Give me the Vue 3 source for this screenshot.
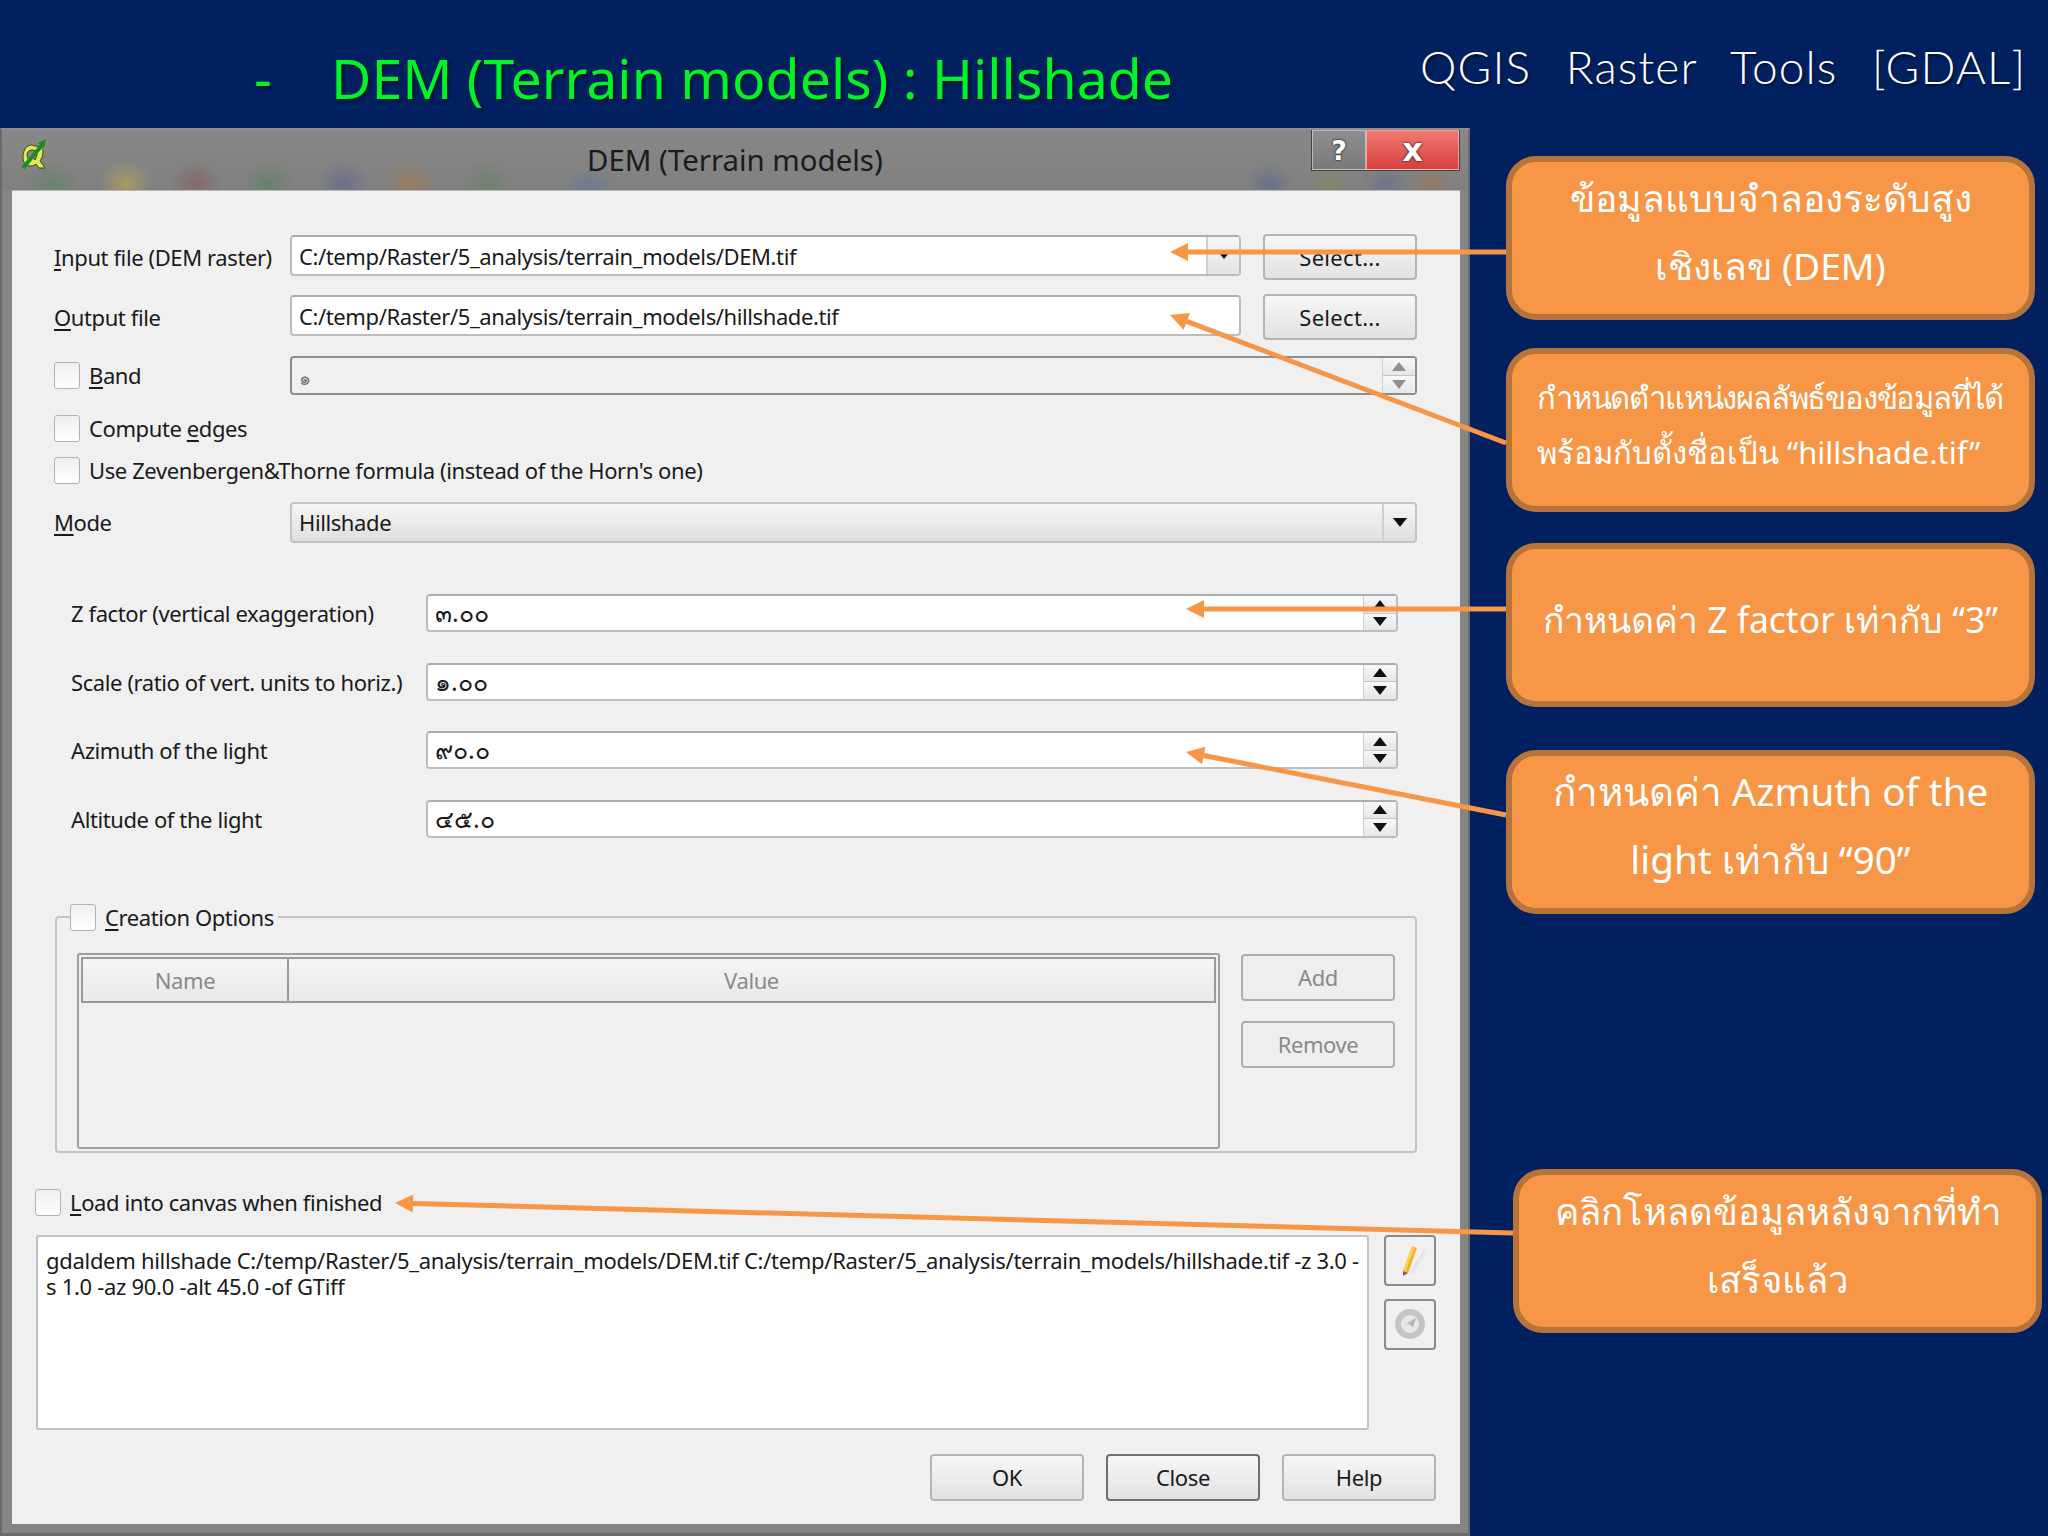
<template>
  <div class="slide">
    <header class="top">
      <h1 class="title"><span class="dash">-</span>DEM (Terrain models) : Hillshade</h1>
      <div class="topic">QGIS Raster Tools [GDAL]</div>
    </header>

    <div class="stage">
      <!-- QGIS dialog -->
      <section class="dialog">
        <div class="titlebar">
          <svg class="qgis" width="28" height="34" viewBox="0 0 28 34">
            <path d="M12 7C6 7 3 13 3 19c0 6 3 9 8 9 2 0 4-1 5-2l3 4h6l-5-7c2-3 3-6 3-9 0-4-4-6-9-6zm0 5c3 0 5 2 5 4s-1 5-2 6l-3-3-3 3c-1-1-2-3-2-5 0-3 2-5 5-5z" fill="#dfe85a" stroke="#3d4a10" stroke-width="1"/>
            <path d="M3 30L22 7" stroke="#1f8a1f" stroke-width="4"/>
            <path d="M18 5l8-4-2 9z" fill="#1f8a1f"/>
          </svg>
          <span class="win-title">DEM (Terrain models)</span>
          <div class="win-btns">
            <span class="win-help">?</span>
            <span class="win-close">x</span>
          </div>
        </div>

        <div class="content">
          <div class="form">
            <div class="row row-file">
              <label class="lab"><span><u>I</u>nput file (DEM raster)</span></label>
              <div class="field combo-edit">
                <span class="val">C:/temp/Raster/5_analysis/terrain_models/DEM.tif</span>
                <span class="drop"><i class="tri down small"></i></span>
              </div>
              <button class="btn sel">Select...</button>
            </div>
            <div class="row row-file second">
              <label class="lab"><span><u>O</u>utput file</span></label>
              <div class="field combo-edit"><span class="val">C:/temp/Raster/5_analysis/terrain_models/hillshade.tif</span></div>
              <button class="btn sel">Select...</button>
            </div>
            <div class="row row-band">
              <label class="lab"><span class="check"></span><span class="up-text"><u>B</u>and</span></label>
              <div class="field disabled">
                <span class="val thai-small">๑</span>
                <span class="spin gray"><b><i class="tri up"></i></b><b><i class="tri down"></i></b></span>
              </div>
            </div>
            <label class="lab line first"><span class="check"></span><span class="up-text">Compute <u>e</u>dges</span></label>
            <label class="lab line"><span class="check"></span><span class="up-text">Use Zevenbergen&amp;Thorne formula (instead of the Horn's one)</span></label>
            <div class="row row-mode">
              <label class="lab"><span class="up-text"><u>M</u>ode</span></label>
              <div class="field combo">
                <span class="val up-text">Hillshade</span>
                <span class="drop wide"><i class="tri down"></i></span>
              </div>
            </div>
          </div>

          <div class="params">
            <div v-for="p in params" :key="p.label" class="param">
              <label class="param-lab">{{ p.label }}</label>
              <div class="field">
                <span class="val thai">{{ p.value }}</span>
                <span class="spin"><b><i class="tri up"></i></b><b><i class="tri down"></i></b></span>
              </div>
            </div>
          </div>

          <fieldset class="group">
            <legend class="legend"><span class="check"></span><span><u>C</u>reation Options</span></legend>
            <div class="options">
              <div class="table">
                <div class="thead">
                  <span class="th name">Name</span>
                  <span class="th value">Value</span>
                </div>
              </div>
              <div class="opt-btns">
                <button class="btn off">Add</button>
                <button class="btn off">Remove</button>
              </div>
            </div>
          </fieldset>

          <label class="lab load"><span class="check"></span><span><u>L</u>oad into canvas when finished</span></label>

          <div class="cmd-row">
            <div class="cmd">gdaldem hillshade C:/temp/Raster/5_analysis/terrain_models/DEM.tif C:/temp/Raster/5_analysis/terrain_models/hillshade.tif -z 3.0 -<br>s 1.0 -az 90.0 -alt 45.0 -of GTiff</div>
            <div class="tools">
              <button class="btn tool">
                <svg width="30" height="38" viewBox="0 0 30 38">
                  <path d="M12 31L26 8" stroke="#d9d9d9" stroke-width="3" opacity=".5" transform="translate(4 1)"/>
                  <path d="M8 30L17 5l5 2-9 25z" fill="#f5b21e"/>
                  <path d="M17 5l2.5 1-9 25L8 30z" fill="#fbd35a"/>
                  <path d="M8 30l5 2-5 3z" fill="#8a5a4a"/>
                </svg>
              </button>
              <button class="btn tool">
                <svg width="34" height="34" viewBox="0 0 34 34">
                  <circle cx="17" cy="17" r="15" fill="#c4c4c4"/>
                  <circle cx="17" cy="17" r="9" fill="#e6e6e6"/>
                  <path d="M13 17l10-6-3 9-4-3z" fill="#b5b5b5"/>
                </svg>
              </button>
            </div>
          </div>

          <div class="actions">
            <button class="btn act">OK</button>
            <button class="btn act focus">Close</button>
            <button class="btn act">Help</button>
          </div>
        </div>
      </section>

      <!-- Notes on the right -->
      <aside class="notes">
        <div v-for="n in notes" :key="n.id" class="note" :class="n.id">
          <p v-for="line in n.lines" :key="line">{{ line }}</p>
        </div>
      </aside>
    </div>

    <!-- Arrows lie over the dialog and the notes -->
    <svg class="arrows" width="2048" height="1536" viewBox="0 0 2048 1536">
      <g v-for="a in arrows" :key="a.id">
        <line :x1="a.x1" :y1="a.y1" :x2="a.x2" :y2="a.y2" stroke="#f79646" stroke-width="5" />
        <polygon :points="a.head" fill="#f79646" />
      </g>
    </svg>
  </div>
</template>

<script setup>
const params = [
  { label: 'Z factor (vertical exaggeration)', value: '๓.๐๐' },
  { label: 'Scale (ratio of vert. units to horiz.)', value: '๑.๐๐' },
  { label: 'Azimuth of the light', value: '๙๐.๐' },
  { label: 'Altitude of the light', value: '๔๕.๐' }
]

const notes = [
  { id: 'n1', lines: ['ข้อมูลแบบจำลองระดับสูง', 'เชิงเลข (DEM)'] },
  { id: 'n2', lines: ['กำหนดตำแหน่งผลลัพธ์ของข้อมูลที่ได้', 'พร้อมกับตั้งชื่อเป็น “hillshade.tif”'] },
  { id: 'n3', lines: ['กำหนดค่า Z factor เท่ากับ “3”'] },
  { id: 'n4', lines: ['กำหนดค่า Azmuth of the', 'light เท่ากับ “90”'] },
  { id: 'n5', lines: ['คลิกโหลดข้อมูลหลังจากที่ทำ', 'เสร็จแล้ว'] }
]

// tip of each arrow points into the dialog
function arrow(id, x1, y1, tx, ty) {
  const dx = x1 - tx
  const dy = y1 - ty
  const len = Math.hypot(dx, dy)
  const ux = dx / len
  const uy = dy / len
  const bx = tx + ux * 18
  const by = ty + uy * 18
  const head = [
    [tx, ty],
    [bx - uy * 9, by + ux * 9],
    [bx + uy * 9, by - ux * 9]
  ].map(p => p.join(',')).join(' ')
  return { id, x1, y1, x2: bx, y2: by, head }
}

const arrows = [
  arrow('a1', 1506, 252, 1170, 252),
  arrow('a2', 1506, 443, 1170, 315),
  arrow('a3', 1506, 609, 1186, 609),
  arrow('a4', 1506, 815, 1186, 752),
  arrow('a5', 1513, 1233, 395, 1203)
]
</script>

<style>
html, body {
  margin: 0;
  background: #002060;
}
</style>

<style scoped>
.slide {
  position: relative;
  width: 2048px;
  height: 1536px;
  overflow: hidden;
  background: #002060;
  font-family: "Noto Sans", "Open Sans", sans-serif;
}

.top {
  height: 128px;
  display: flex;
  box-sizing: border-box;
}

.title {
  margin: 0;
  padding: 38px 0 0 254px;
  width: 1420px;
  box-sizing: border-box;
  font-size: 55.4px;
  line-height: 80px;
  font-weight: 400;
  color: #00f526;
  text-shadow: 2px 2px 3px rgba(0, 0, 0, .5);
  white-space: nowrap;
}

.dash {
  display: inline-block;
  width: 77px;
}

.topic {
  padding-top: 35px;
  font-family: Lato, sans-serif;
  font-weight: 300;
  font-size: 46px;
  line-height: 64px;
  letter-spacing: 1.1px;
  word-spacing: 21px;
  color: #fff;
  white-space: nowrap;
  text-shadow: 1px 2px 2px rgba(0, 0, 0, .5);
}

.stage {
  display: flex;
  height: 1408px;
}

/* dialog */
.dialog {
  width: 1470px;
  flex: none;
  box-sizing: border-box;
  padding: 0 8px 9px 10px;
  border: 2px solid #6a6a6a;
  border-bottom: 3px solid #6a6a6a;
  border-top-color: #8f8f8f;
  background: #858585;
  display: flex;
  flex-direction: column;
}

.titlebar {
  position: relative;
  height: 60px;
  flex: none;
  margin: 0 -8px 0 -10px;
  display: flex;
  background:
    radial-gradient(ellipse 28px 22px at 51px 54px, rgba(60, 130, 70, .3), transparent),
    radial-gradient(ellipse 26px 24px at 124px 54px, rgba(210, 190, 50, .45), transparent),
    radial-gradient(ellipse 26px 24px at 194px 54px, rgba(140, 70, 70, .4), transparent),
    radial-gradient(ellipse 26px 24px at 268px 54px, rgba(60, 130, 70, .35), transparent),
    radial-gradient(ellipse 26px 24px at 341px 54px, rgba(70, 80, 160, .35), transparent),
    radial-gradient(ellipse 26px 24px at 408px 54px, rgba(190, 120, 50, .4), transparent),
    radial-gradient(ellipse 26px 24px at 485px 54px, rgba(70, 130, 70, .3), transparent),
    radial-gradient(ellipse 26px 20px at 587px 58px, rgba(70, 110, 170, .35), transparent),
    radial-gradient(ellipse 24px 20px at 1267px 54px, rgba(70, 90, 150, .4), transparent),
    radial-gradient(ellipse 24px 20px at 1327px 54px, rgba(140, 140, 80, .4), transparent),
    radial-gradient(ellipse 24px 20px at 1384px 54px, rgba(70, 90, 150, .3), transparent),
    radial-gradient(ellipse 24px 20px at 1428px 54px, rgba(170, 110, 60, .4), transparent),
    linear-gradient(#888, #808080);
}

.qgis {
  position: absolute;
  left: 18px;
  top: 8px;
}

.win-title {
  position: absolute;
  left: 585px;
  top: 10px;
  font-size: 29.4px;
  line-height: 40px;
  color: #1b1b1b;
  white-space: nowrap;
}

.win-btns {
  position: absolute;
  right: 8px;
  top: 0;
  height: 40px;
  display: flex;
  border: 1px solid #444;
  border-top: 0;
}

.win-help,
.win-close {
  display: flex;
  align-items: center;
  justify-content: center;
  box-sizing: border-box;
  font-family: "DejaVu Sans", sans-serif;
  font-weight: 700;
  color: #fff;
  text-shadow: 0 0 2px #222, 0 0 2px #222;
  border: 1px solid rgba(255, 255, 255, .45);
}

.win-help {
  width: 54px;
  background: linear-gradient(#8e8e8e, #7a7a7a);
  font-size: 27px;
}

.win-close {
  width: 93px;
  background: linear-gradient(#ee7a72, #d83f3d);
  font-size: 32px;
  line-height: 30px;
}

.content {
  flex: 1;
  position: relative;
  background: #f0f0f1;
  color: #1a1a1a;
  font-size: 22px;
  letter-spacing: -.4px;
  box-sizing: border-box;
  padding-top: 42px;
  border-top: 1px solid #b9b9b9;
}

.form {
  padding: 0 43px 0 42px;
}

.row {
  display: flex;
  align-items: center;
}

.row-file {
  height: 47px;
}

.row-file.second {
  margin-top: 13px;
}

.row-band {
  margin-top: 16px;
  height: 39px;
}

.row-mode {
  margin-top: 18px;
  height: 41px;
}

.lab {
  width: 236px;
  flex: none;
  display: flex;
  align-items: center;
  gap: 9px;
  white-space: nowrap;
  line-height: 30px;
}

.lab u {
  text-decoration-thickness: 2px;
  text-underline-offset: 3px;
}

.up-text {
  padding-bottom: 2px;
}

.line {
  width: auto;
  height: 27px;
  margin-top: 15px;
}

.line.first {
  margin-top: 20px;
}

.check {
  display: block;
  width: 26px;
  height: 27px;
  flex: none;
  box-sizing: border-box;
  border: 1px solid #b2b2b2;
  border-radius: 3px;
  background: linear-gradient(#efefef, #fff);
}

.field {
  flex: 1;
  min-width: 0;
  display: flex;
  align-items: center;
  box-sizing: border-box;
  height: 100%;
  border: 2px solid #bdbdbd;
  border-top-color: #adadad;
  border-radius: 4px;
  background: #fff;
}

.row-file .field {
  height: 41px;
  margin-top: -2px;
}

.val {
  flex: 1;
  padding-left: 7px;
  white-space: nowrap;
}

.combo-edit {
  flex: none;
  width: 951px;
  margin-right: 22px;
}

.sel {
  width: 154px;
  height: 46px;
  letter-spacing: .3px;
}

.drop {
  width: 33px;
  height: 100%;
  border-left: 2px solid #cfcfcf;
  background: linear-gradient(#f6f6f6, #e4e4e4);
  display: flex;
  align-items: center;
  justify-content: center;
  box-sizing: border-box;
}

.tri {
  display: block;
  width: 0;
  height: 0;
  border-left: 7px solid transparent;
  border-right: 7px solid transparent;
}

.tri.up {
  border-bottom: 9px solid #111;
}

.tri.down {
  border-top: 9px solid #111;
}

.tri.small {
  border-left-width: 5px;
  border-right-width: 5px;
  border-top-width: 6px;
}

.disabled {
  background: #f0f0f1;
  border-color: #8d8d8d;
}

.thai-small {
  font-size: 19px;
  color: #777;
  padding-top: 4px;
}

.spin {
  width: 33px;
  height: 100%;
  flex: none;
  display: flex;
  flex-direction: column;
  box-sizing: border-box;
  border-left: 1px solid #cfcfcf;
}

.spin b {
  flex: 1;
  display: flex;
  align-items: center;
  justify-content: center;
  background: linear-gradient(#f8f8f8, #e6e6e6);
  border-bottom: 1px solid #c6c6c6;
}

.spin b:last-child {
  border-bottom: 0;
}

.spin.gray .tri.up {
  border-bottom-color: #8f8f8f;
}

.spin.gray .tri.down {
  border-top-color: #8f8f8f;
}

.combo {
  background: linear-gradient(#f6f6f6, #dfdfdf);
  border-color: #c4c4c4;
}

.wide {
  background: transparent;
}

.params {
  margin-top: 51px;
  padding: 0 62px 0 59px;
  display: flex;
  flex-direction: column;
  gap: 30.5px;
}

.param {
  height: 38px;
  display: flex;
  align-items: center;
}

.param-lab {
  width: 355px;
  flex: none;
  white-space: nowrap;
}

.thai {
  font-size: 25px;
  letter-spacing: 0;
}

.group {
  margin: 66px 43px 0 43px;
  padding: 22px 20px 4px 20px;
  min-width: 0;
  height: 249px;
  box-sizing: border-box;
  border: 2px solid #c4c4c4;
  border-radius: 4px;
}

.legend {
  margin-left: -7px;
  padding: 0 4px 0 0;
  display: flex;
  align-items: center;
  gap: 9px;
  height: 27px;
  white-space: nowrap;
}

.legend u,
.load u {
  text-underline-offset: 3px;
}

.options {
  display: flex;
  align-items: flex-start;
  gap: 21px;
}

.table {
  width: 1143px;
  height: 196px;
  box-sizing: border-box;
  border: 2px solid #a0a0a0;
  border-radius: 3px;
  padding: 2px;
}

.thead {
  display: flex;
  height: 46px;
  border: 2px solid #9a9a9a;
  box-sizing: border-box;
  background: linear-gradient(#f5f5f5, #e9e9e9);
}

.th {
  display: flex;
  align-items: center;
  justify-content: center;
  color: #8a8a8a;
}

.name {
  width: 204px;
  border-right: 2px solid #9a9a9a;
}

.value {
  flex: 1;
}

.opt-btns {
  display: flex;
  flex-direction: column;
  gap: 20px;
  padding-top: 1px;
}

.btn {
  padding: 0;
  font: inherit;
  letter-spacing: inherit;
  color: #1a1a1a;
  border: 2px solid #b4b4b4;
  border-radius: 4px;
  background: linear-gradient(#f7f7f7, #e2e2e2);
  display: flex;
  align-items: center;
  justify-content: center;
}

.sel {
  letter-spacing: .3px;
}

.off {
  width: 154px;
  height: 47px;
  color: #8a8a8a;
  background: #eee;
  border-color: #adadad;
}

.load {
  width: auto;
  margin: 36px 0 0 23px;
  height: 27px;
}

.cmd-row {
  margin: 19px 24px 0 24px;
  display: flex;
  gap: 15px;
}

.cmd {
  flex: 1;
  height: 195px;
  box-sizing: border-box;
  padding: 10px 8px;
  background: #fff;
  border: 2px solid #c2c2c2;
  border-radius: 3px;
  line-height: 26px;
  letter-spacing: -.3px;
  white-space: nowrap;
  overflow: hidden;
}

.tools {
  display: flex;
  flex-direction: column;
  gap: 13px;
}

.tool {
  width: 52px;
  height: 51px;
  border-color: #8a8a8a;
  background: #f0f0f0;
}

.actions {
  margin: 24px 24px 0 0;
  display: flex;
  justify-content: flex-end;
  gap: 22px;
}

.act {
  width: 154px;
  height: 47px;
}

.focus {
  border-color: #6f6f6f;
}

/* callouts */
.notes {
  flex: 1;
  padding: 28px 0 0 36px;
  display: flex;
  flex-direction: column;
  font-family: "Noto Sans", sans-serif;
}

.note {
  width: 529px;
  height: 164px;
  box-sizing: border-box;
  flex: none;
  padding-top: 2px;
  border: 6px solid #b7743a;
  border-radius: 30px;
  background: #f79646;
  color: #fff;
  text-align: center;
  font-size: 37.2px;
  line-height: 68px;
}

.note p {
  margin: 0;
  white-space: nowrap;
}

.n2 {
  margin-top: 28px;
  padding-top: 16px;
  font-size: 31px;
  line-height: 55px;
  text-align: left;
  padding-left: 25px;
}

.n2 p:first-child {
  letter-spacing: -1.2px;
}

.n3 {
  margin-top: 31px;
  padding-top: 36px;
  font-size: 35.5px;
}

.n4 {
  margin-top: 43px;
  padding-top: 1px;
  font-size: 38.6px;
}

.n5 {
  margin: 255px 0 0 7px;
  font-size: 36.5px;
}

.arrows {
  position: absolute;
  left: 0;
  top: 0;
  pointer-events: none;
}
</style>
